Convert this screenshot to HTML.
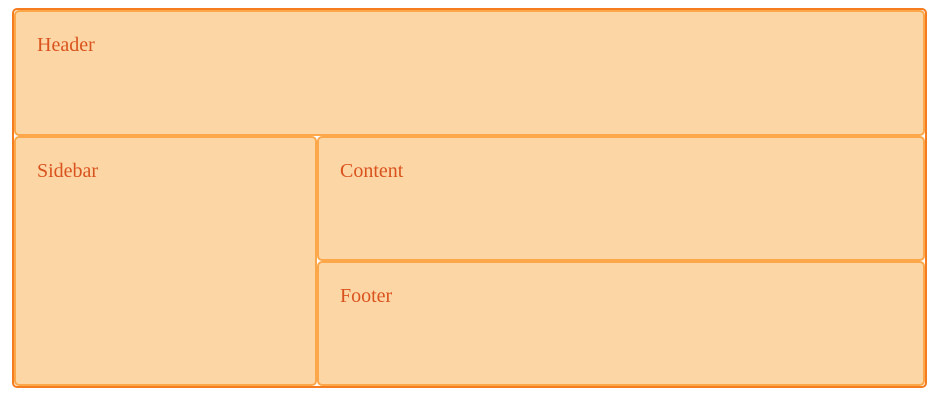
<!DOCTYPE html>
<html><head><style>
html,body{margin:0;padding:0;background:#fff;width:938px;height:402px;overflow:hidden}
.wrap{position:absolute;left:12px;top:8px;width:911px;height:376px;border:2px solid #f57c1f;border-radius:5px;display:grid;grid-template-columns:303px 608px;grid-template-rows:126px 125px 125px}
.b{background:#fdd6a6;border:2px solid #fca84a;border-radius:5px;box-sizing:border-box;padding:0 21px;font-family:"Liberation Serif",serif;font-size:20px;color:#d9531e;line-height:20px;padding-top:23px}
.h{grid-column:1/3}
.s{grid-row:2/4}
</style></head><body>
<div class="wrap">
<div class="b h">Header</div>
<div class="b s">Sidebar</div>
<div class="b">Content</div>
<div class="b">Footer</div>
</div>
</body></html>
